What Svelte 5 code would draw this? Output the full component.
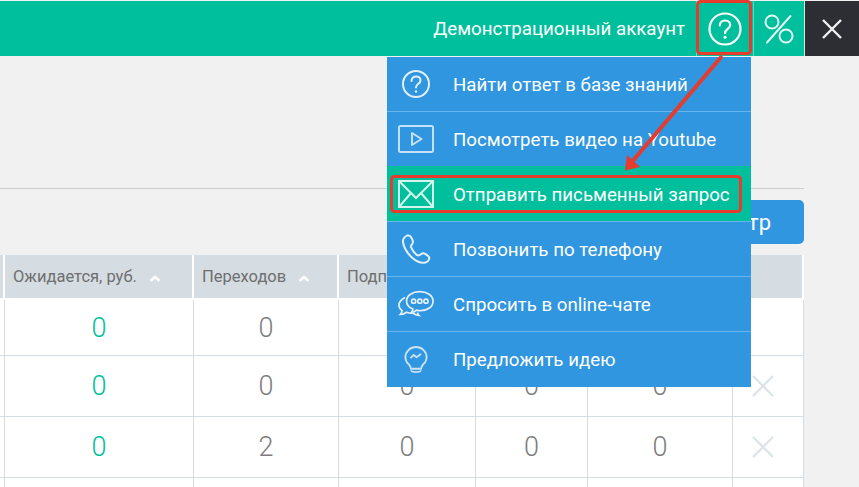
<script>
	const columns = ['', 'Ожидается, руб.', 'Переходов', 'Подписок', '', '', ''];
	const rows = [
		['0', '0', '', '', '', false],
		['0', '0', '0', '0', '0', true],
		['0', '2', '0', '0', '0', true],
		['', '', '', '', '', false]
	];
</script>

<main class="page">
	<header class="topbar">
		<span class="account">Демонстрационный аккаунт</span>
		<button class="top-btn help" aria-label="Помощь">
			<svg width="36" height="36" viewBox="0 0 36 36" fill="none" stroke="#fff" stroke-width="2.200">
				<circle cx="18" cy="18" r="15.500" />
				<path d="M12.800 14.500c0-3 2.300-5 5.300-5 2.900 0 5.100 1.900 5.100 4.500 0 3.800-5.200 4-5.200 8.200" stroke-linecap="round" />
				<circle cx="18" cy="26.200" r="1.500" fill="#fff" stroke="none" />
			</svg>
		</button>
		<button class="top-btn percent" aria-label="Проценты">
			<svg width="32" height="32" viewBox="0 0 32 32" fill="none" stroke="#e4f8f3" stroke-width="2">
				<circle cx="9" cy="9" r="6.500" />
				<circle cx="23" cy="23" r="6.500" />
				<path d="M27.500 3 4 29.500" stroke-linecap="round" />
			</svg>
		</button>
		<button class="top-btn close" aria-label="Закрыть">
			<svg width="20" height="20" viewBox="0 0 20 20" stroke="#f0f0f0" stroke-width="2.400">
				<path d="M1 1l18 18M19 1 1 19" />
			</svg>
		</button>
	</header>

	<section class="filters">
		<button class="filter-btn">Фильтр</button>
	</section>

	<table class="stats">
		<colgroup>
			<col style="width: 4px" />
			<col style="width: 189px" />
			<col style="width: 145px" />
			<col style="width: 137px" />
			<col style="width: 112px" />
			<col style="width: 145px" />
			<col style="width: 71px" />
		</colgroup>
		<thead>
			<tr>
				{#each columns as title}
					<th>
						{#if title}
							{title}
							<svg class="sort" width="12" height="7" viewBox="0 0 12 7" fill="none" stroke="#fff" stroke-width="2.400">
								<path d="M1.500 6 6 1.800 10.500 6" />
							</svg>
						{/if}
					</th>
				{/each}
			</tr>
		</thead>
		<tbody>
			{#each rows as row}
				<tr>
					<td class="gutter"></td>
					<td class="money">{row[0]}</td>
					<td>{row[1]}</td>
					<td>{row[2]}</td>
					<td>{row[3]}</td>
					<td>{row[4]}</td>
					<td class="actions">
						{#if row[5]}
							<svg class="remove" width="22" height="22" viewBox="0 0 22 22" stroke="#dde5ea" stroke-width="2.400">
								<path d="M1 1l20 20M21 1 1 21" />
							</svg>
						{/if}
					</td>
				</tr>
			{/each}
		</tbody>
	</table>

	<nav class="menu">
		<a class="item">
			<span class="ico">
				<svg width="30" height="30" viewBox="0 0 30 30" fill="none" stroke="#e3f0fb" stroke-width="2">
					<circle cx="15" cy="15" r="13" />
					<path d="M10.500 12c0-2.700 2-4.400 4.600-4.400 2.600 0 4.400 1.600 4.400 3.800 0 3.300-4.500 3.500-4.500 7.200" stroke-linecap="round" />
					<circle cx="15" cy="22.500" r="1.200" fill="#e3f0fb" stroke="none" />
				</svg>
			</span>
			Найти ответ в базе знаний
		</a>
		<a class="item">
			<span class="ico">
				<svg width="36" height="28" viewBox="0 0 36 28" fill="none" stroke="#c4e1f7" stroke-width="2">
					<rect x="1" y="1" width="34" height="26" rx="1.500" />
					<path d="M14 8v12l9.500-6z" stroke-linejoin="round" />
				</svg>
			</span>
			Посмотреть видео на Youtube
		</a>
		<a class="item active">
			<span class="ico">
				<svg width="36" height="28" viewBox="0 0 36 28" fill="none" stroke="#d5f5ec" stroke-width="2">
					<rect x="1" y="1" width="34" height="26" />
					<path d="M1 1l17 17L35 1M1 27l12-14M35 27 23 13" />
				</svg>
			</span>
			Отправить письменный запрос
		</a>
		<a class="item">
			<span class="ico">
				<svg width="30" height="30" viewBox="0 0 30 30" fill="none" stroke="#e3f0fb" stroke-width="2">
					<path d="M6 1.500C3.500 3 1.500 5 2 8c1 6.500 5 12 9.500 16 3 2.700 8 5.500 13 4.500 2.500-.5 4.500-3.500 3.500-5.500-1-1.500-4-3.300-5.500-3.800-2-.5-3 2.300-5 2.300-2.500 0-6.500-5.500-7.500-8.500-.6-2 2-3 2-5 0-1.500-1.800-5-3-6-.6-.5-1.500-.7-2.500-.5z" stroke-linejoin="round" />
				</svg>
			</span>
			Позвонить по телефону
		</a>
		<a class="item">
			<span class="ico">
				<svg width="38" height="29" viewBox="0 0 38 29" fill="none" stroke="#e3f0fb" stroke-width="1.800">
					<path d="M23 1c7.500 0 14 4 14 10 0 6-6 10-13 10-1.500 0-3-.2-4.500-.6-1.500 1.500-3.500 2.300-5.500 2.600 1-1 1.500-2.300 1.700-3.700C11.500 17.500 9 14.500 9 11 9 5 15.500 1 23 1z" />
					<path d="M7.500 7C3.500 9 1 11.500 1 15c0 2.500 1.200 4.500 3.300 6-.2 1.500-.8 3-1.800 4 2.500 0 5-1 6.500-2.300 2 .8 4.500 1.200 7 1 2 1.500 4 2 6 2.300-1-1-1.300-2-1.300-3" />
					<circle cx="16.500" cy="11" r="2.200" />
					<circle cx="23" cy="11" r="2.200" />
					<circle cx="29.500" cy="11" r="2.200" />
				</svg>
			</span>
			Спросить в online-чате
		</a>
		<a class="item">
			<span class="ico">
				<svg width="24" height="29" viewBox="0 0 26 30" fill="none" stroke="#c8e3f8" stroke-width="2">
					<path d="M13 1.500C6.500 1.500 1.500 6.500 1.500 12.500c0 3.200 1.300 5.500 3.500 7.500 1.500 1.500 2.300 3 2.500 5h11c.2-2 1-3.500 2.500-5 2.200-2 3.500-4.300 3.500-7.500 0-6-5-11-11.500-11z" />
					<path d="M8 27.500c.8 1 2 1.200 5 1.200s4.200-.2 5-1.200" stroke-linecap="round" />
					<path d="M7 13.500l3.500-3.500 3 2.500L18.500 9" stroke-linejoin="round" />
				</svg>
			</span>
			Предложить идею
		</a>
	</nav>

	<svg class="marks" width="859" height="487" viewBox="0 0 859 487" fill="none">
		<rect x="697.500" y="1.500" width="53" height="52" rx="3" stroke="#e53c2e" stroke-width="3" />
		<rect x="391.500" y="176.500" width="349" height="35" rx="3" stroke="#e53c2e" stroke-width="3" />
		<path d="M722 56 631 163" stroke="#e53c2e" stroke-width="4" />
		<path d="M625 170.500 627 155 640 167z" fill="#e53c2e" />
	</svg>
</main>

<style>
	:global(body) {
		background: #f1f1f1;
	}

	.page {
		position: relative;
		width: 859px;
		height: 487px;
		overflow: hidden;
		font-family: Roboto, sans-serif;
		background: #f1f1f1;
	}

	.topbar {
		display: flex;
		align-items: stretch;
		justify-content: flex-end;
		height: 55px;
		margin-top: 1px;
		background: #00bf9c;
	}

	.account {
		align-self: center;
		margin-right: 11px;
		color: #fff;
		font-size: 18.700px;
	}

	.top-btn {
		display: flex;
		align-items: center;
		justify-content: center;
		padding: 0;
		border: none;
		background: transparent;
	}

	.help {
		width: 57px;
		border-left: 1px solid #5fd9c2;
	}

	.percent {
		width: 51px;
		border-left: 1px solid #5fd9c2;
	}

	.close {
		width: 55px;
		background: #2d2e33;
		border-left: 1px solid #cfe9e3;
	}

	.filters {
		display: flex;
		justify-content: flex-end;
		box-sizing: border-box;
		width: 804px;
		height: 67px;
		padding-top: 11px;
		margin-top: 132px;
		border-top: 1px solid #ccc;
	}

	.filter-btn {
		width: 120px;
		height: 44px;
		padding: 0 33px 0 0;
		border: none;
		border-radius: 5px;
		background: #2f96df;
		color: #fff;
		font-family: inherit;
		font-size: 22px;
		text-align: right;
	}

	.stats {
		width: 804px;
		border-collapse: collapse;
		table-layout: fixed;
		background: #fff;
		color: #7d7d7d;
	}

	th {
		height: 43px;
		padding: 0 0 0 8px;
		border-right: 2px solid #fff;
		background: #d5dde3;
		color: #6f6f6f;
		font-size: 16.500px;
		font-weight: 400;
		text-align: left;
		white-space: nowrap;
		overflow: hidden;
	}

	thead tr {
		border-bottom: 2px solid #fff;
	}

	td {
		height: 60px;
		padding: 0 0 0 1px;
		border: 1px solid #d5dde3;
		font-size: 27px;
		font-weight: 300;
		text-align: center;
	}

	td.gutter {
		padding: 0;
		border-left: none;
	}

	td.actions {
		padding: 0;
	}

	tbody tr:first-child td {
		height: 55px;
	}

	.money {
		color: #00bf9c;
	}

	.sort {
		margin-left: 12px;
		vertical-align: 0;
	}

	.remove {
		display: block;
		margin: 0 0 0 19px;
	}

	.menu {
		position: absolute;
		top: 57px;
		left: 387px;
		width: 364px;
		background: #2f96df;
	}

	.item {
		display: flex;
		align-items: center;
		box-sizing: border-box;
		height: 55px;
		padding: 2px 0 0 66px;
		position: relative;
		border-bottom: 1px solid #69b4ea;
		color: #fff;
		font-size: 18.700px;
	}

	.item:last-child {
		border-bottom-color: transparent;
	}

	.item.active {
		background: #00bf9c;
		box-shadow: 0 -1px 0 #00bf9c;
	}

	.ico {
		position: absolute;
		left: 11px;
		top: 0;
		bottom: 0;
		width: 36px;
		display: flex;
		align-items: center;
		justify-content: center;
	}

	.marks {
		position: absolute;
		top: 0;
		left: 0;
		pointer-events: none;
	}
</style>
